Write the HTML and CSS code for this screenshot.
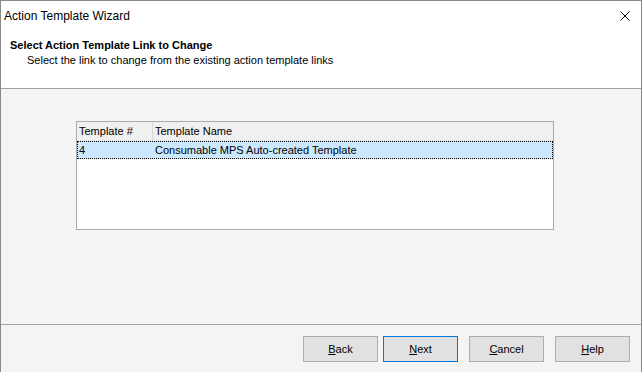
FILE: index.html
```html
<!DOCTYPE html>
<html lang="en">
<head>
    <meta charset="UTF-8">
    <title>Action Template Wizard</title>
    <link rel="stylesheet" href="styles.css">
</head>
<body>
    <div id="wizard">
        <div class="titlebar">
            <span class="title">Action Template Wizard</span>
            <svg class="close" width="10" height="10" viewBox="0 0 10 10">
                <path d="M0.5 0.5 L9.5 9.5 M9.5 0.5 L0.5 9.5" stroke="#000" stroke-width="1"/>
            </svg>
        </div>
        <div class="header">
            <div class="heading">Select Action Template Link to Change</div>
            <div class="subheading">Select the link to change from the existing action template links</div>
        </div>
        <div class="content">
            <div class="listview">
                <div class="row head">
                    <div class="col num">Template #</div>
                    <div class="col name">Template Name</div>
                </div>
                <div class="row selected">
                    <div class="col num">4</div>
                    <div class="col name">Consumable MPS Auto-created Template</div>
                </div>
            </div>
        </div>
        <div class="footer">
            <button class="back"><u>B</u>ack</button>
            <button class="default"><u>N</u>ext</button>
            <button><u>C</u>ancel</button>
            <button><u>H</u>elp</button>
        </div>
    </div>
</body>
</html>
```

FILE: styles.css
```css
body {
    margin: 0;
    font-family: "Liberation Sans", Arial, sans-serif;
    font-size: 11px;
    color: #000;
}
#wizard {
    width: 642px;
    height: 372px;
    box-sizing: border-box;
    border: 1px solid #888;
    border-bottom: none;
    background: #f4f4f4;
    display: flex;
    flex-direction: column;
}
.titlebar {
    height: 29px;
    background: #fff;
    display: flex;
    align-items: center;
    justify-content: space-between;
    padding: 0 11px 0 3px;
}
.title {
    font-size: 12px;
}
.header {
    height: 59px;
    background: #fff;
    border-bottom: 1px solid #a0a0a0;
    padding-left: 9px;
    box-sizing: border-box;
    padding-top: 8px;
}
.heading {
    font-weight: bold;
    font-size: 11px;
    line-height: 15px;
}
.subheading {
    padding-left: 17px;
    line-height: 15px;
}
.content {
    flex: 1;
    border-bottom: 1px solid #a0a0a0;
    padding: 32px 0 0 75px;
}
.listview {
    width: 476px;
    height: 107px;
    background: #fff;
    border: 1px solid #acacac;
}
.row {
    display: flex;
    height: 18px;
    align-items: center;
}
.row.head {
    background: #f0f0f0;
    border-bottom: 1px solid #e5e5e5;
}
.col {
    padding-left: 2px;
    box-sizing: border-box;
}
.col.num {
    width: 76px;
}
.head .col.num {
    border-right: 1px solid #dadada;
    height: 18px;
    line-height: 18px;
}
.row.selected {
    background: #cce8ff;
    outline: 1px dotted #000;
    outline-offset: -1px;
}
.footer {
    height: 47px;
    display: flex;
    align-items: flex-start;
    padding: 11px 0 0 302px;
    box-sizing: border-box;
}
button {
    width: 75px;
    height: 26px;
    margin-right: 11px;
    font-family: inherit;
    font-size: 11px;
    background: #e1e1e1;
    border: 1px solid #adadad;
    color: #000;
}
button.back {
    margin-right: 5px;
}
button.default {
    border-color: #0078d7;
}
```
